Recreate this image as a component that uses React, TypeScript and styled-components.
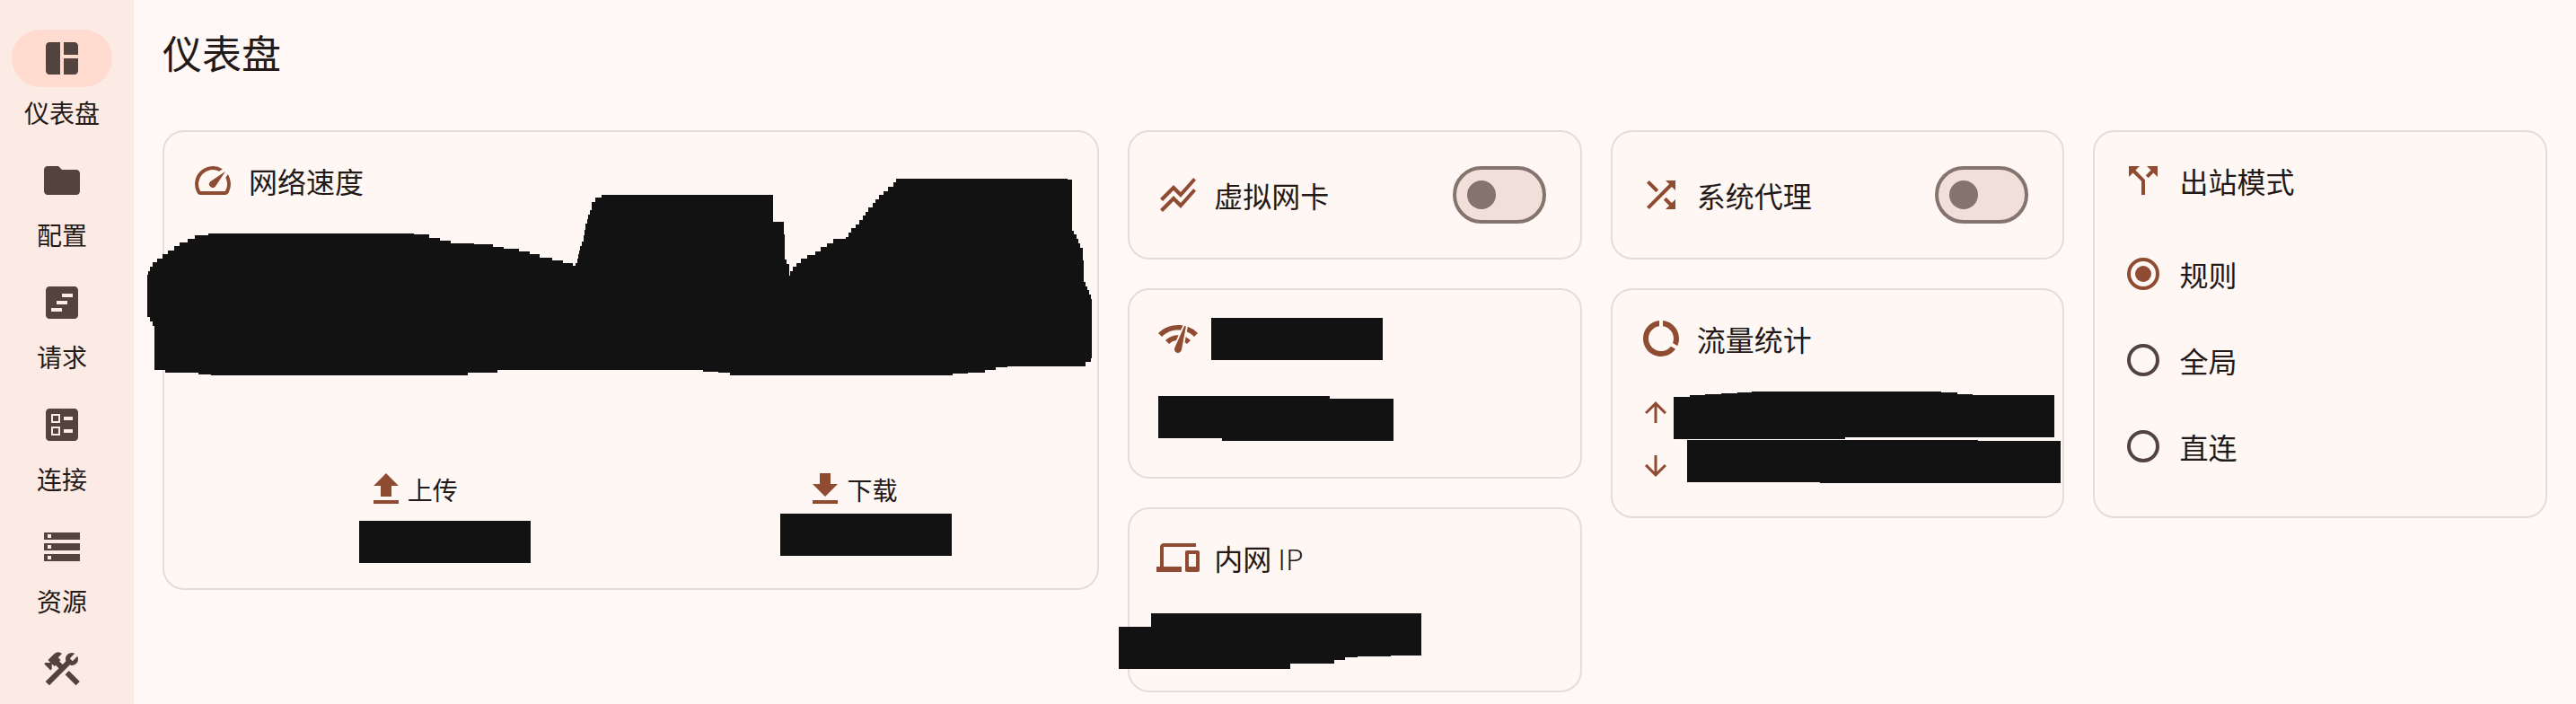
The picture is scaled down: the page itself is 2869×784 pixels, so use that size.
import React from 'react';
import styled, { createGlobalStyle } from 'styled-components';
import {
  MdArrowDownward,
  MdArrowUpward,
  MdBallot,
  MdCallSplit,
  MdConstruction,
  MdDataUsage,
  MdDevices,
  MdFolder,
  MdNetworkCheck,
  MdShuffle,
  MdSpaceDashboard,
  MdSpeed,
  MdStackedLineChart,
  MdStorage,
  MdViewTimeline,
} from 'react-icons/md';

const color = {
  surface: '#fff8f6',
  card: '#fff7f4',
  container: '#fceae4',
  highest: '#f1dfd9',
  indicator: '#ffdbd0',
  primary: '#8f4c32',
  text: '#231917',
  muted: '#53433e',
  outline: '#85736d',
  border: '#e6dcda',
  mask: '#121212',
};

const GlobalStyle = createGlobalStyle`
  *, *::before, *::after { box-sizing: border-box; }
  body {
    margin: 0;
    background: ${color.surface};
    color: ${color.text};
    font-family: "Noto Sans CJK SC", "Noto Sans", sans-serif;
  }
`;

const Shell = styled.div`
  display: flex;
  min-height: 100vh;
`;

const Sidebar = styled.nav`
  flex: 0 0 149px;
  display: flex;
  flex-direction: column;
  gap: 24px;
  padding: 33px 12px 0 13px;
  background: ${color.container};
`;

const NavItem = styled.a`
  display: flex;
  flex-direction: column;
  align-items: center;
  gap: 8px;
  color: ${color.text};
  text-decoration: none;
  width: 112px;
`;

const Indicator = styled.span<{ $active?: boolean }>`
  display: flex;
  align-items: center;
  justify-content: center;
  width: 112px;
  height: 64px;
  border-radius: 32px;
  background: ${(p) => (p.$active ? color.indicator : 'transparent')};
  color: ${color.muted};
  font-size: 48px;
`;

const NavLabel = styled.span`
  font-size: 28px;
  line-height: 40px;
  white-space: nowrap;
`;

const Main = styled.main`
  flex: 1;
  min-width: 0;
  padding: 0 32px;
`;

const Title = styled.h1`
  margin: 0;
  padding: 26px 0 55px;
  font-size: 44px;
  line-height: 64px;
  font-weight: 400;
`;

const Grid = styled.div`
  display: grid;
  grid-template-columns: repeat(5, minmax(0, 1fr));
  gap: 32px;
`;

const Column = styled.div<{ $span?: number }>`
  grid-column: span ${(p) => p.$span ?? 1};
  display: flex;
  flex-direction: column;
  gap: 32px;
`;

const Card = styled.section<{ $minHeight: number }>`
  position: relative;
  display: flex;
  flex-direction: column;
  min-height: ${(p) => p.$minHeight}px;
  padding: 30px;
  border: 2px solid ${color.border};
  border-radius: 24px;
  background: ${color.card};
`;

const ToggleCard = styled(Card)`
  flex-direction: row;
  align-items: center;
  justify-content: space-between;
  padding-right: 38px;
`;

const CardHeader = styled.div`
  display: flex;
  align-items: center;
  gap: 16px;

  svg {
    flex: none;
    width: 48px;
    height: 48px;
    color: ${color.primary};
  }
`;

const CardTitle = styled.h2`
  margin: 0;
  font-size: 32px;
  line-height: 48px;
  font-weight: 400;
  white-space: nowrap;
`;

const SwitchTitle = styled.label`
  font-size: 32px;
  line-height: 48px;
  white-space: nowrap;
`;

const Latin = styled.span`
  font-weight: 300;
`;

const Switch = styled.input`
  appearance: none;
  flex: none;
  display: flex;
  align-items: center;
  width: 104px;
  height: 64px;
  margin: 0;
  padding: 0 12px;
  border: 4px solid ${color.outline};
  border-radius: 32px;
  background: ${color.highest};

  &::before {
    content: '';
    width: 32px;
    height: 32px;
    border-radius: 50%;
    background: ${color.outline};
  }

  &:checked {
    justify-content: flex-end;
  }
`;

const Stats = styled.div`
  display: grid;
  grid-template-columns: 1fr 1fr;
  margin-top: auto;
  padding-bottom: 56px;
`;

const Stat = styled.div`
  display: flex;
  align-items: center;
  justify-content: center;
  font-size: 28px;
  line-height: 48px;

  svg {
    width: 48px;
    height: 48px;
    color: ${color.primary};
  }
`;

const TrafficRows = styled.div`
  display: flex;
  flex-direction: column;
  gap: 24px;
  margin-top: 40px;
  color: ${color.primary};
  font-size: 36px;

  svg {
    display: block;
  }
`;

const RadioGroup = styled.div`
  display: flex;
  flex-direction: column;
  margin-top: 32px;
`;

const RadioRow = styled.label`
  display: flex;
  align-items: center;
  gap: 22px;
  height: 96px;
  padding-left: 6px;
  font-size: 32px;
  line-height: 48px;
`;

const Radio = styled.input`
  appearance: none;
  width: 36px;
  height: 36px;
  margin: 0;
  padding: 5px;
  border: 4px solid ${color.muted};
  border-radius: 50%;

  &:checked {
    border-color: ${color.primary};
    background: ${color.primary} content-box;
  }
`;

const MaskSvg = styled.svg<{ $left: number; $top: number }>`
  position: absolute;
  left: ${(p) => p.$left}px;
  top: ${(p) => p.$top}px;
  z-index: 1;
  fill: ${color.mask};
  pointer-events: none;
`;

interface MaskProps {
  left: number;
  top: number;
  width: number;
  height: number;
  d?: string;
}

/* Opaque patch hiding private values; a plain rectangle unless an outline is given. */
function Mask({ left, top, width, height, d }: MaskProps) {
  return (
    <MaskSvg
      $left={left}
      $top={top}
      width={width}
      height={height}
      viewBox={`0 0 ${width} ${height}`}
      shapeRendering="crispEdges"
      aria-hidden="true"
    >
      <path d={d ?? `M0 0H${width}V${height}H0Z`} />
    </MaskSvg>
  );
}

const chartMask: Array<[number, number]> = [
  [164, 306], [165, 302], [167, 297], [170, 292], [175, 288], [181, 283], [187, 279], [194, 274],
  [200, 270], [209, 266], [217, 262], [232, 260], [461, 261], [478, 265], [490, 268], [502, 271],
  [528, 272], [549, 275], [561, 277], [578, 280], [590, 283], [601, 287], [615, 290], [627, 293],
  [638, 296], [641, 293], [643, 288], [644, 283], [645, 279], [646, 274], [648, 269], [650, 262],
  [651, 256], [652, 249], [654, 244], [655, 239], [657, 234], [659, 225], [663, 220], [670, 217],
  [861, 247], [873, 261], [874, 289], [876, 294], [879, 307], [880, 302], [883, 297], [887, 293],
  [892, 288], [899, 284], [908, 280], [914, 275], [921, 271], [928, 266], [942, 264], [945, 259],
  [948, 254], [953, 250], [957, 245], [961, 240], [964, 236], [967, 231], [972, 226], [975, 222],
  [979, 217], [984, 213], [989, 208], [995, 203], [998, 199], [1189, 200], [1194, 257], [1196, 261],
  [1199, 266], [1201, 271], [1203, 276], [1206, 290], [1207, 314], [1209, 319], [1211, 323],
  [1213, 328], [1215, 333], [1216, 399], [1215, 403], [1209, 408], [1122, 409], [1109, 412],
  [1097, 415], [1078, 416], [1061, 418], [813, 415], [800, 414], [783, 412], [554, 415], [521, 418],
  [235, 417], [221, 415], [184, 412], [172, 363], [170, 358], [167, 353],
];

const chartMaskPath =
  'M0 189' + chartMask.map(([x, y]) => `H${x - 164}V${y - 199}`).join('') + 'H0Z';

const UploadIcon = () => (
  <svg viewBox="0 0 24 24" fill="currentColor" aria-hidden="true">
    <path d="M5 20h14v-2H5v2zm0-10h4v6h6v-6h4l-7-7-7 7z" />
  </svg>
);

const DownloadIcon = () => (
  <svg viewBox="0 0 24 24" fill="currentColor" aria-hidden="true">
    <path d="M5 20h14v-2H5v2zM19 9h-4V3H9v6H5l7 7 7-7z" />
  </svg>
);

const navItems = [
  { id: 'dashboard', label: '仪表盘', Icon: MdSpaceDashboard },
  { id: 'profiles', label: '配置', Icon: MdFolder },
  { id: 'requests', label: '请求', Icon: MdViewTimeline },
  { id: 'connections', label: '连接', Icon: MdBallot },
  { id: 'resources', label: '资源', Icon: MdStorage },
  { id: 'tools', label: '', Icon: MdConstruction },
];

const modes = [
  { id: 'rule', label: '规则' },
  { id: 'global', label: '全局' },
  { id: 'direct', label: '直连' },
];

export default function App() {
  return (
    <>
      <GlobalStyle />
      <Shell>
        <Sidebar>
          {navItems.map(({ id, label, Icon }, i) => (
            <NavItem
              key={id}
              href={`#${id}`}
              aria-label={label || id}
              aria-current={i === 0 ? 'page' : undefined}
            >
              <Indicator $active={i === 0}>
                <Icon />
              </Indicator>
              {label && <NavLabel>{label}</NavLabel>}
            </NavItem>
          ))}
        </Sidebar>
        <Main>
          <Title>仪表盘</Title>
          <Grid>
            <Column $span={2}>
              <Card $minHeight={512}>
                <CardHeader>
                  <MdSpeed />
                  <CardTitle>网络速度</CardTitle>
                </CardHeader>
                <Stats>
                  <Stat>
                    <UploadIcon />
                    上传
                  </Stat>
                  <Stat>
                    <DownloadIcon />
                    下载
                  </Stat>
                </Stats>
                <Mask left={-19} top={52} width={1052} height={219} d={chartMaskPath} />
                <Mask left={217} top={433} width={191} height={47} />
                <Mask left={686} top={425} width={191} height={47} />
              </Card>
            </Column>

            <Column>
              <ToggleCard $minHeight={144}>
                <CardHeader>
                  <MdStackedLineChart />
                  <SwitchTitle htmlFor="tun">虚拟网卡</SwitchTitle>
                </CardHeader>
                <Switch id="tun" type="checkbox" role="switch" />
              </ToggleCard>
              <Card $minHeight={212}>
                <CardHeader>
                  <MdNetworkCheck />
                </CardHeader>
                <Mask left={91} top={31} width={191} height={47} />
                <Mask left={32} top={118} width={262} height={50} d="M0 0H191V3H262V50H71V47H0Z" />
              </Card>
              <Card $minHeight={206}>
                <CardHeader>
                  <MdDevices />
                  <CardTitle>
                    内网 <Latin>IP</Latin>
                  </CardTitle>
                </CardHeader>
                <Mask
                  left={-12}
                  top={116}
                  width={337}
                  height={62}
                  d="M0 15H36V0H337V47H303V48H266V49H252V52H240V56H191V62H0Z"
                />
              </Card>
            </Column>

            <Column>
              <ToggleCard $minHeight={144}>
                <CardHeader>
                  <MdShuffle />
                  <SwitchTitle htmlFor="proxy">系统代理</SwitchTitle>
                </CardHeader>
                <Switch id="proxy" type="checkbox" role="switch" />
              </ToggleCard>
              <Card $minHeight={256}>
                <CardHeader>
                  <MdDataUsage />
                  <CardTitle>流量统计</CardTitle>
                </CardHeader>
                <TrafficRows>
                  <MdArrowUpward />
                  <MdArrowDownward />
                </TrafficRows>
                <Mask
                  left={68}
                  top={113}
                  width={424}
                  height={53}
                  d="M0 6H18V4H35V3H53V2H71V1H87V0H298V1H316V3H333V4H424V51H191V53H0Z"
                />
                <Mask left={83} top={167} width={416} height={48} d="M0 0H324V1H416V48H148V47H0Z" />
              </Card>
            </Column>

            <Column>
              <Card $minHeight={432}>
                <CardHeader>
                  <MdCallSplit />
                  <CardTitle id="mode-title">出站模式</CardTitle>
                </CardHeader>
                <RadioGroup role="radiogroup" aria-labelledby="mode-title">
                  {modes.map(({ id, label }, i) => (
                    <RadioRow key={id}>
                      <Radio type="radio" name="mode" value={id} defaultChecked={i === 0} />
                      {label}
                    </RadioRow>
                  ))}
                </RadioGroup>
              </Card>
            </Column>
          </Grid>
        </Main>
      </Shell>
    </>
  );
}
